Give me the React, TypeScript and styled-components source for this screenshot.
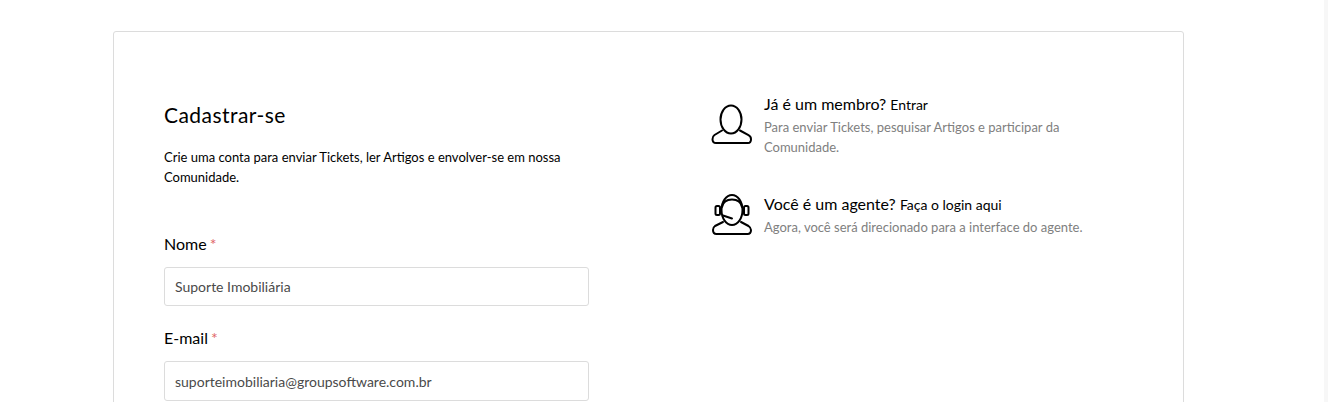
import React from 'react';
import styled, { createGlobalStyle } from 'styled-components';

const GlobalStyle = createGlobalStyle`
    html, body {
        margin: 0;
        padding: 0;
        height: 402px;
        overflow: hidden;
        background: #ffffff;
    }
    body {
        font-family: Lato, "Open Sans", sans-serif;
        color: #000000;
    }
`;

const UserIcon = () => (
    <svg width="44" height="42" viewBox="0 0 44 42" fill="none" stroke="#000" strokeWidth="2" strokeLinecap="round" strokeLinejoin="round">
        <ellipse cx="21" cy="15.500" rx="10.500" ry="14" />
        <path d="M12 26.500L4.500 31C3 32 2.500 33.500 2.500 35.200C2.500 37.800 3.800 39 6 39H38C40 39 41 37.800 41 35.200C41 33.500 40 32 38.500 31.200L30 26.500" />
    </svg>
);

const AgentIcon = () => (
    <svg width="44" height="44" viewBox="0 0 44 44" fill="none" stroke="#000" strokeWidth="2" strokeLinecap="round" strokeLinejoin="round">
        <ellipse cx="22" cy="17" rx="10.500" ry="15" />
        <path d="M12 14C13 9 17 6.500 22 6.500S31 9 32 14" />
        <rect x="5.500" y="13" width="4.500" height="9" rx="1.500" />
        <rect x="34" y="13" width="4.500" height="9" rx="1.500" />
        <path d="M13 22.500L22 25.500" />
        <path d="M13 29L5 33C3.500 34 3 35.500 3 37C3 39.500 4.300 41 6.500 41H37.500C39.700 41 41 39.500 41 37C41 35.500 40 34 38.500 33L31 29" />
    </svg>
);

export default function App() {
    return (
        <>
            <GlobalStyle />
            <Page>
                <Content>
                    <Card>
                        <FormColumn>
                            <Title>Cadastrar-se</Title>
                            <Description>
                                Crie uma conta para enviar Tickets, ler Artigos e envolver-se em nossa Comunidade.
                            </Description>
                            <Field>
                                <Label>Nome <Required>*</Required></Label>
                                <TextInput $height={39} readOnly value="Suporte Imobiliária" />
                            </Field>
                            <Field>
                                <Label>E-mail <Required>*</Required></Label>
                                <TextInput $height={40} readOnly value="suporteimobiliaria@groupsoftware.com.br" />
                            </Field>
                        </FormColumn>
                        <InfoColumn>
                            <InfoRow>
                                <IconSlot $top={10}><UserIcon /></IconSlot>
                                <InfoText>
                                    <InfoTitle>Já é um membro? <InfoLink>Entrar</InfoLink></InfoTitle>
                                    <InfoNote>Para enviar Tickets, pesquisar Artigos e participar da Comunidade.</InfoNote>
                                </InfoText>
                            </InfoRow>
                            <InfoRow>
                                <IconSlot $top={-1}><AgentIcon /></IconSlot>
                                <InfoText>
                                    <InfoTitle>Você é um agente? <InfoLink>Faça o login aqui</InfoLink></InfoTitle>
                                    <InfoNote>Agora, você será direcionado para a interface do agente.</InfoNote>
                                </InfoText>
                            </InfoRow>
                        </InfoColumn>
                    </Card>
                </Content>
                <ScrollRail />
            </Page>
        </>
    );
}

const Page = styled.div`
    display: flex;
    height: 402px;
    overflow: hidden;
`;

const Content = styled.main`
    flex: 1;
    padding: 31px 140px 0 113px;
    min-width: 0;
`;

const ScrollRail = styled.div`
    width: 4px;
    background: #f7f7f7;
`;

const Card = styled.section`
    display: flex;
    box-sizing: border-box;
    width: 1071px;
    height: 500px;
    padding: 70px 50px 0;
    border: 1px solid #dcdcdc;
    border-radius: 3px;
`;

const FormColumn = styled.div`
    width: 425px;
    flex: none;
`;

const Title = styled.h1`
    margin: 0 0 19px;
    font-size: 21px;
    font-weight: 400;
    line-height: 26px;
    letter-spacing: 0.45px;
`;

const Description = styled.p`
    margin: 0 0 47px;
    font-size: 13px;
    line-height: 20px;
`;

const Field = styled.div`
    margin-bottom: 22px;
`;

const Label = styled.label`
    display: block;
    margin-bottom: 13px;
    font-size: 16px;
    line-height: 20px;
`;

const Required = styled.span`
    margin-left: -1px;
    color: #e06666;
`;

const TextInput = styled.input<{ $height: number }>`
    display: block;
    box-sizing: border-box;
    width: 100%;
    height: ${(p) => p.$height}px;
    padding: 0 10px;
    border: 1px solid #dcdcdc;
    border-radius: 3px;
    outline: none;
    font-family: inherit;
    font-size: 14px;
    color: #4a4a4a;
`;

const InfoColumn = styled.div`
    display: flex;
    flex-direction: column;
    gap: 37px;
    width: 374px;
    margin-left: 121px;
    margin-top: -8px;
`;

const InfoRow = styled.div`
    display: flex;
    gap: 10px;
`;

const IconSlot = styled.div<{ $top: number }>`
    width: 44px;
    flex: none;
    margin-top: ${(p) => p.$top}px;
`;

const InfoText = styled.div`
    min-width: 0;
`;

const InfoTitle = styled.div`
    font-size: 16px;
    line-height: 20px;
`;

const InfoLink = styled.a`
    font-size: 14px;
    color: #000000;
`;

const InfoNote = styled.p`
    margin: 2px 0 0;
    font-size: 13px;
    line-height: 20px;
    color: #808080;
`;
